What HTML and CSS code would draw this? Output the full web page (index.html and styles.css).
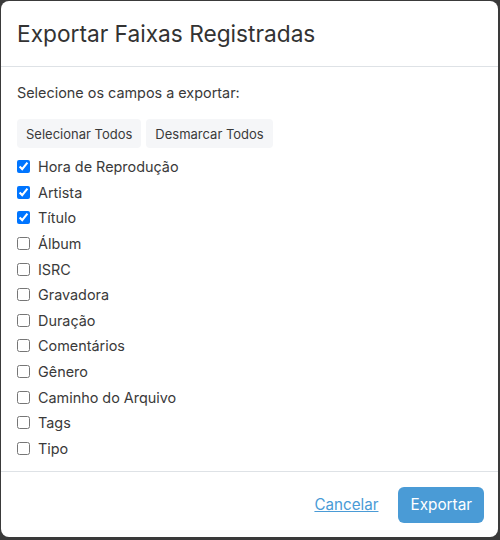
FILE: index.html
```html
<!DOCTYPE html>
<html lang="pt">
<head>
<meta charset="utf-8">
<link rel="stylesheet" href="styles.css">
</head>
<body>
<div class="modal">
  <div class="modal-header">
    <h2 class="modal-title">Exportar Faixas Registradas</h2>
  </div>
  <div class="modal-body">
    <p class="intro">Selecione os campos a exportar:</p>
    <div class="actions">
      <button class="btn-light">Selecionar Todos</button>
      <button class="btn-light">Desmarcar Todos</button>
    </div>
    <div class="fields">
      <label class="field"><input type="checkbox" checked> Hora de Reprodução</label>
      <label class="field"><input type="checkbox" checked> Artista</label>
      <label class="field"><input type="checkbox" checked> Título</label>
      <label class="field"><input type="checkbox"> Álbum</label>
      <label class="field"><input type="checkbox"> ISRC</label>
      <label class="field"><input type="checkbox"> Gravadora</label>
      <label class="field"><input type="checkbox"> Duração</label>
      <label class="field"><input type="checkbox"> Comentários</label>
      <label class="field"><input type="checkbox"> Gênero</label>
      <label class="field"><input type="checkbox"> Caminho do Arquivo</label>
      <label class="field"><input type="checkbox"> Tags</label>
      <label class="field"><input type="checkbox"> Tipo</label>
    </div>
  </div>
  <div class="modal-footer">
    <a class="link" href="#">Cancelar</a>
    <button class="btn-primary">Exportar</button>
  </div>
</div>
</body>
</html>
```

FILE: styles.css
```css
html, body {
  margin: 0;
  padding: 0;
}
body {
  background: #3a3a3a;
  width: 500px;
  height: 540px;
  overflow: hidden;
  font-family: Inter, "Noto Sans", sans-serif;
  color: #3a3a3a;
}
.modal {
  margin: 1px 2px 0 1px;
  height: 536px;
  background: #fff;
  border-radius: 8px;
  display: flex;
  flex-direction: column;
  overflow: hidden;
}
.modal-header {
  height: 65px;
  border-bottom: 1px solid #dee2e6;
  display: flex;
  align-items: center;
  padding: 0 16px;
  flex: none;
}
.modal-title {
  margin: 0;
  font-size: 22.7px;
  font-weight: 400;
  color: #333;
  line-height: 1.2;
}
.modal-body {
  flex: 1;
  padding: 16px 16px 0 16px;
}
.intro {
  margin: 0 0 16px 0;
  font-size: 14.4px;
  line-height: 20px;
}
.actions {
  display: flex;
  gap: 5px;
  margin-bottom: 6px;
}
.btn-light {
  font-family: inherit;
  font-size: 13px;
  color: #3a3a3a;
  background: #f5f6f8;
  border: none;
  border-radius: 4px;
  height: 29px;
  padding: 0 9px;
}
.fields {
  display: flex;
  flex-direction: column;
}
.field {
  display: flex;
  align-items: center;
  font-size: 14.4px;
  height: 25.6px;
  gap: 5px;
}
.field input {
  margin: 0 3px 0 0;
  width: 13px;
  height: 13px;
}
.modal-footer {
  height: 65px;
  border-top: 1px solid #dee2e6;
  flex: none;
  display: flex;
  align-items: center;
  justify-content: flex-end;
  padding: 0 14px 0 16px;
  gap: 20px;
}
.link {
  color: #4a9bd6;
  font-size: 15.2px;
  text-decoration: underline;
}
.btn-primary {
  font-family: inherit;
  font-size: 15.3px;
  color: #fff;
  background: #4a9bd6;
  border: none;
  border-radius: 6px;
  height: 36px;
  padding: 0 12px;
}
```
